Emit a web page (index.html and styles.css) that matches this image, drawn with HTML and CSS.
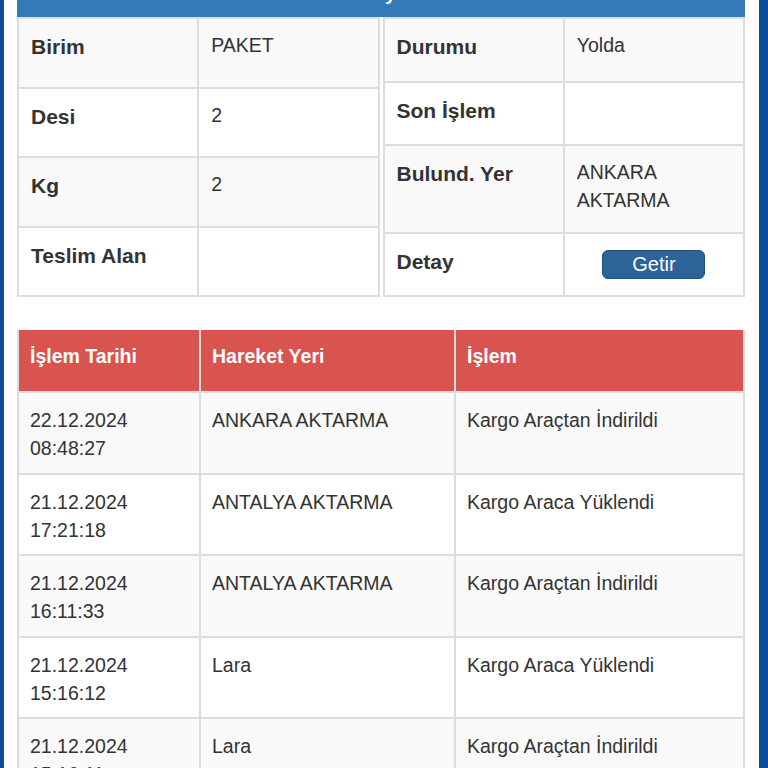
FILE: index.html
```html
<!DOCTYPE html>
<html lang="tr">
<head>
<meta charset="utf-8">
<title>Kargo Detay</title>
<link rel="stylesheet" href="styles.css">
</head>
<body>
<div class="page">
  <main class="content">
    <div class="panel-heading">Detaylar</div>
    <div class="info-row">
      <table class="info">
        <tr class="odd"><td class="lbl">Birim</td><td class="val">PAKET</td></tr>
        <tr><td class="lbl">Desi</td><td class="val">2</td></tr>
        <tr class="odd"><td class="lbl">Kg</td><td class="val">2</td></tr>
        <tr><td class="lbl">Teslim Alan</td><td class="val"></td></tr>
      </table>
      <table class="info">
        <tr class="odd"><td class="lbl">Durumu</td><td class="val">Yolda</td></tr>
        <tr><td class="lbl">Son İşlem</td><td class="val"></td></tr>
        <tr class="odd"><td class="lbl">Bulund. Yer</td><td class="val">ANKARA<br>AKTARMA</td></tr>
        <tr><td class="lbl">Detay</td><td class="val btn-cell"><button class="btn">Getir</button></td></tr>
      </table>
    </div>
    <table class="moves">
      <colgroup><col class="c1"><col class="c2"><col class="c3"></colgroup>
      <thead>
        <tr><th>İşlem Tarihi</th><th>Hareket Yeri</th><th>İşlem</th></tr>
      </thead>
      <tbody>
        <tr class="odd"><td>22.12.2024<br>08:48:27</td><td>ANKARA AKTARMA</td><td>Kargo Araçtan İndirildi</td></tr>
        <tr><td>21.12.2024<br>17:21:18</td><td>ANTALYA AKTARMA</td><td>Kargo Araca Yüklendi</td></tr>
        <tr class="odd"><td>21.12.2024<br>16:11:33</td><td>ANTALYA AKTARMA</td><td>Kargo Araçtan İndirildi</td></tr>
        <tr><td>21.12.2024<br>15:16:12</td><td>Lara</td><td>Kargo Araca Yüklendi</td></tr>
        <tr class="odd"><td>21.12.2024<br>15:16:11</td><td>Lara</td><td>Kargo Araçtan İndirildi</td></tr>
      </tbody>
    </table>
  </main>
</div>
</body>
</html>
```

FILE: styles.css
```css
html, body {
  margin: 0;
  padding: 0;
  height: 768px;
  overflow: hidden;
  background: #fff;
}
body {
  font-family: "Liberation Sans", Arial, Helvetica, sans-serif;
  color: #333;
}
.page {
  display: flex;
  min-height: 768px;
  border-left: 4px solid #0b4d9b;
  border-right: 9px solid #0b4d9b;
}
.content {
  flex: 1;
  min-width: 0;
  padding: 0 14px 0 13px;
  margin-top: -31px;
}
.panel-heading {
  background: #337ab7;
  color: #fff;
  font-weight: bold;
  font-size: 20px;
  line-height: 28px;
  padding: 10px 15px 10px;
  height: 28px;
  text-align: center;
}
.info-row {
  display: flex;
  gap: 3px;
  align-items: stretch;
}
.info {
  flex: 1;
  border-collapse: collapse;
  table-layout: fixed;
}
.info td {
  border: 2px solid #ddd;
  vertical-align: top;
  padding: 12px 12px 17.5px;
  width: 50%;
}
.info tr.odd td { background: #f9f9f9; }
.info .lbl {
  font-weight: bold;
  font-size: 21px;
  line-height: 32px;
  padding-left: 12px;
}
.info .val {
  font-size: 19.5px;
  line-height: 28px;
}
.info .btn-cell {
  text-align: center;
  vertical-align: middle;
  padding: 0 13px;
}
.btn {
  display: inline-block;
  width: 103px;
  height: 29px;
  padding: 0;
  border: 1px solid #23527c;
  border-radius: 6px;
  background: #2c6399;
  color: #fff;
  font-family: "Liberation Sans", Arial, sans-serif;
  font-size: 20px;
  line-height: 27px;
}
.moves {
  width: 100%;
  margin-top: 33px;
  border-collapse: collapse;
  table-layout: fixed;
}
.moves .c1 { width: 182px; }
.moves .c2 { width: 255px; }
.moves .c3 { width: auto; }
.moves th {
  background: #d9534f;
  color: #fff;
  font-weight: bold;
  font-size: 19.5px;
  line-height: 28px;
  text-align: left;
  padding: 12px 11px 21px;
  border: 2px solid #ddd;
  border-top: 0;
}
.moves td {
  font-size: 19.5px;
  line-height: 28px;
  vertical-align: top;
  padding: 13px 11px 10.5px;
  border: 2px solid #ddd;
}
.moves tr.odd td { background: #f9f9f9; }
```
